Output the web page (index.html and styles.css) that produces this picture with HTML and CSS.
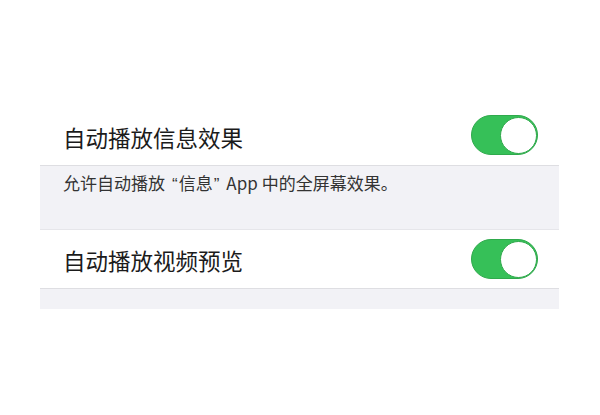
FILE: index.html
```html
<!DOCTYPE html>
<html lang="zh-CN">
<head>
<meta charset="utf-8">
<link rel="stylesheet" href="styles.css">
</head>
<body>
<div class="page">
  <div class="panel">
    <div class="row row-first">
      <span class="label">自动播放信息效果</span>
      <span class="toggle"><span class="knob"></span></span>
    </div>
    <div class="footer">允许自动播放<span class="quote quote-open">“</span>信息<span class="quote quote-close">”</span><span class="latin">App</span>中的全屏幕效果。</div>
    <div class="row row-second">
      <span class="label">自动播放视频预览</span>
      <span class="toggle"><span class="knob"></span></span>
    </div>
    <div class="tail"></div>
  </div>
</div>
</body>
</html>
```
FILE: styles.css
```css
html, body {
  margin: 0;
  padding: 0;
  background: #ffffff;
}
.page {
  width: 600px;
  height: 415px;
  padding-top: 105px;
  box-sizing: border-box;
  font-family: "Noto Sans CJK SC", "Noto Sans", sans-serif;
}
.panel {
  margin-left: 40px;
  width: 519px;
  display: flex;
  flex-direction: column;
}
.row {
  display: flex;
  align-items: center;
  justify-content: space-between;
  background: #ffffff;
  box-sizing: border-box;
  padding: 0 21px 0 23px;
  border-bottom: 1px solid #dedee2;
}
.row-first {
  height: 61px;
}
.row-second {
  height: 60px;
  border-top: 1px solid #e6e6ea;
}
.label {
  font-size: 22.5px;
  line-height: 1;
  color: #1b1b1b;
  position: relative;
  top: 2px;
}
.row-second .label {
  top: 1px;
}
.footer {
  background: #f2f2f6;
  height: 63px;
  box-sizing: border-box;
  padding: 7px 0 0 23px;
  font-size: 17px;
  line-height: 20px;
  color: #333333;
}
.quote {
  font-family: "Liberation Sans", sans-serif;
}
.quote-open {
  padding: 0 1px 0 7px;
}
.quote-close {
  padding: 0 7px 0 1px;
}
.latin {
  padding: 0 4px 0 0;
}
.tail {
  background: #f2f2f6;
  height: 20px;
}
.toggle {
  width: 67px;
  height: 40px;
  border-radius: 20px;
  background: #36c058;
  box-sizing: border-box;
  border: 1.5px solid #2faa4c;
  display: flex;
  justify-content: flex-end;
  align-items: center;
}
.knob {
  width: 37px;
  height: 37px;
  border-radius: 50%;
  background: #ffffff;
  box-sizing: border-box;
  border: 1.5px solid #2ea84a;
}
```
